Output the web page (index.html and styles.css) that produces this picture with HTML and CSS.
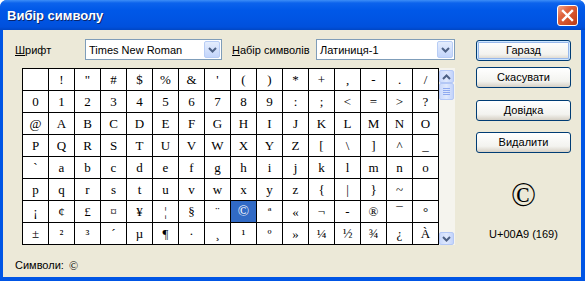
FILE: index.html
```html
<!DOCTYPE html>
<html lang="uk">
<head>
    <meta charset="UTF-8">
    <title>Вибір символу</title>
    <link rel="stylesheet" href="styles.css">
</head>
<body>
    <div class="window">
        <div class="titlebar">
            <span class="title">Вибір символу</span>
            <div class="close">
                <svg width="13" height="13" viewBox="0 0 13 13"><path d="M2 2 L11 11 M11 2 L2 11" stroke="#fff" stroke-width="2.4" stroke-linecap="square"/></svg>
            </div>
        </div>

        <div class="client">
            <div class="main">
                <div class="toolbar">
                    <label class="label label-font"><u>Ш</u>рифт</label>
                    <div class="select select-font">
                        <span class="select-text">Times New Roman</span>
                        <span class="drop"><svg width="9" height="6" viewBox="0 0 9 6"><path d="M1 1 L4.5 4.5 L8 1" fill="none" stroke="#4D6185" stroke-width="2"/></svg></span>
                    </div>
                    <label class="label label-set"><u>Н</u>абір символів</label>
                    <div class="select select-set">
                        <span class="select-text">Латиниця-1</span>
                        <span class="drop"><svg width="9" height="6" viewBox="0 0 9 6"><path d="M1 1 L4.5 4.5 L8 1" fill="none" stroke="#4D6185" stroke-width="2"/></svg></span>
                    </div>
                </div>

                <div class="charmap">
                    <div class="grid">
                        <span></span><span>!</span><span>"</span><span>#</span><span>$</span><span>%</span><span>&amp;</span><span>'</span><span>(</span><span>)</span><span>*</span><span>+</span><span>,</span><span>-</span><span>.</span><span>/</span>
                        <span>0</span><span>1</span><span>2</span><span>3</span><span>4</span><span>5</span><span>6</span><span>7</span><span>8</span><span>9</span><span>:</span><span>;</span><span>&lt;</span><span>=</span><span>&gt;</span><span>?</span>
                        <span>@</span><span>A</span><span>B</span><span>C</span><span>D</span><span>E</span><span>F</span><span>G</span><span>H</span><span>I</span><span>J</span><span>K</span><span>L</span><span>M</span><span>N</span><span>O</span>
                        <span>P</span><span>Q</span><span>R</span><span>S</span><span>T</span><span>U</span><span>V</span><span>W</span><span>X</span><span>Y</span><span>Z</span><span>[</span><span>\</span><span>]</span><span>^</span><span>_</span>
                        <span>`</span><span>a</span><span>b</span><span>c</span><span>d</span><span>e</span><span>f</span><span>g</span><span>h</span><span>i</span><span>j</span><span>k</span><span>l</span><span>m</span><span>n</span><span>o</span>
                        <span>p</span><span>q</span><span>r</span><span>s</span><span>t</span><span>u</span><span>v</span><span>w</span><span>x</span><span>y</span><span>z</span><span>{</span><span>|</span><span>}</span><span>~</span><span></span>
                        <span>¡</span><span>¢</span><span>£</span><span>¤</span><span>¥</span><span>¦</span><span>§</span><span>¨</span><span class="selected">©</span><span>ª</span><span>«</span><span>¬</span><span>-</span><span>®</span><span>¯</span><span>°</span>
                        <span>±</span><span>²</span><span>³</span><span>´</span><span>µ</span><span>¶</span><span>·</span><span>¸</span><span>¹</span><span>º</span><span>»</span><span>¼</span><span>½</span><span>¾</span><span>¿</span><span>À</span>
                    </div>
                    <div class="scrollbar">
                        <div class="sb-btn"><svg width="9" height="6" viewBox="0 0 9 6"><path d="M1 5 L4.5 1.5 L8 5" fill="none" stroke="#4D6185" stroke-width="2"/></svg></div>
                        <div class="sb-thumb"><i></i><i></i><i></i><i></i></div>
                        <div class="sb-track"></div>
                        <div class="sb-btn"><svg width="9" height="6" viewBox="0 0 9 6"><path d="M1 1 L4.5 4.5 L8 1" fill="none" stroke="#4D6185" stroke-width="2"/></svg></div>
                    </div>
                </div>

                <div class="status">Символи: <span class="status-char">©</span></div>
            </div>

            <div class="side">
                <div class="btn btn-default">Гаразд</div>
                <div class="btn btn-cancel">Скасувати</div>
                <div class="btn btn-help"><u>Д</u>овідка</div>
                <div class="btn btn-delete">Ви<u>д</u>алити</div>
                <div class="preview">©</div>
                <div class="code">U+00A9 (169)</div>
            </div>
        </div>
    </div>
</body>
</html>
```

FILE: styles.css
```css
body {
    margin: 0;
    padding: 0;
    background-color: #ffffff;
    font-family: "Liberation Sans", Arial, sans-serif;
    font-size: 11px;
    color: #000000;
}

.window {
    width: 585px;
    height: 281px;
    box-sizing: border-box;
    display: flex;
    flex-direction: column;
    background-color: #0055e5;
    border-radius: 7px 7px 0 0;
    overflow: hidden;
}

/* XP blue caption */
.titlebar {
    height: 30px;
    flex-shrink: 0;
    display: flex;
    align-items: center;
    justify-content: space-between;
    padding: 0 7px 0 7px;
    background: linear-gradient(#3d8ef7 0, #0c63ec 3px, #0058e8 10px, #0055e4 60%, #0050dc 90%, #0046c4 100%);
}

.title {
    color: #ffffff;
    font-weight: bold;
    font-size: 13px;
    text-shadow: 1px 1px #0a246a;
    margin-top: 1px;
}

.close {
    width: 21px;
    height: 21px;
    box-sizing: border-box;
    border: 1px solid #ffffff;
    border-radius: 3px;
    background: linear-gradient(135deg, #f0a68c 0%, #e0633d 35%, #cc4a22 75%, #b83c16 100%);
    display: flex;
    align-items: center;
    justify-content: center;
    margin-top: 1px;
}

.client {
    flex: 1;
    margin: 0 4px 4px 3px;
    background-color: #ece9d8;
    display: flex;
}

.main {
    width: 460px;
    padding: 9px 0 0 12px;
    box-sizing: border-box;
}

.toolbar {
    display: flex;
    align-items: center;
    height: 21px;
}

.label {
    display: block;
}

.label-font {
    width: 70px;
}

.label-set {
    width: 84px;
    margin-left: 10px;
}

.select {
    height: 21px;
    box-sizing: border-box;
    border: 1px solid #7f9db9;
    background-color: #ffffff;
    display: flex;
    align-items: center;
    justify-content: space-between;
    padding: 0 1px 0 3px;
}

.select-font {
    width: 137px;
}

.select-set {
    width: 139px;
}

.drop {
    width: 16px;
    height: 17px;
    box-sizing: border-box;
    border: 1px solid #b8cdf5;
    border-radius: 2px;
    background: linear-gradient(#e4edfd, #c3d5fb);
    display: flex;
    align-items: center;
    justify-content: center;
}

.charmap {
    display: flex;
    margin: 8px 0 0 7px;
    width: 434px;
}

.grid {
    display: grid;
    grid-template-columns: repeat(16, 25px);
    grid-auto-rows: 21px;
    gap: 1px;
    padding: 1px;
    background-color: #000000;
}

.grid span {
    background-color: #ffffff;
    font-family: "Liberation Serif", "Times New Roman", serif;
    font-size: 13px;
    line-height: 21px;
    text-align: center;
}

.grid .selected {
    background-color: #316ac5;
    color: #ffffff;
    font-size: 15px;
}

.scrollbar {
    width: 16px;
    display: flex;
    flex-direction: column;
    background-color: #f5f4ee;
    padding: 2px 1px 0 0;
    box-sizing: border-box;
}

.sb-btn,
.sb-thumb {
    width: 15px;
    box-sizing: border-box;
    border: 1px solid #b4c8f6;
    border-radius: 2px;
    background: linear-gradient(90deg, #cbdafc, #e0e9fd 50%, #c2d3fb);
    display: flex;
    align-items: center;
    justify-content: center;
}

.sb-btn {
    height: 13px;
}

.sb-thumb {
    height: 17px;
    flex-direction: column;
    gap: 1px;
}

.sb-thumb i {
    display: block;
    width: 7px;
    height: 1px;
    background-color: #8faaf0;
}

.sb-track {
    flex: 1;
}

.status {
    margin-top: 14px;
    display: flex;
    gap: 5px;
}

.status-char {
    font-family: "Liberation Serif", serif;
    font-size: 12px;
}

.side {
    display: flex;
    flex-direction: column;
    align-items: center;
    padding: 10px 0 0 13px;
    width: 95px;
}

.btn {
    width: 95px;
    height: 21px;
    box-sizing: border-box;
    border: 1px solid #003c74;
    border-radius: 3px;
    background: linear-gradient(#ffffff, #f3f3ef 70%, #d6d0c5);
    font-weight: normal;
    line-height: 19px;
    text-align: center;
    color: #000000;
}

.btn-default {
    box-shadow: inset 0 0 0 1px #cee7ff, inset 0 0 0 2px #98b8ea;
}

.btn-cancel {
    margin-top: 6px;
}

.btn-help {
    margin-top: 12px;
}

.btn-delete {
    margin-top: 11px;
}

.preview {
    margin-top: 25px;
    font-family: "Liberation Serif", "Times New Roman", serif;
    font-size: 33px;
    line-height: 34px;
}

.code {
    margin-top: 16px;
}
```
